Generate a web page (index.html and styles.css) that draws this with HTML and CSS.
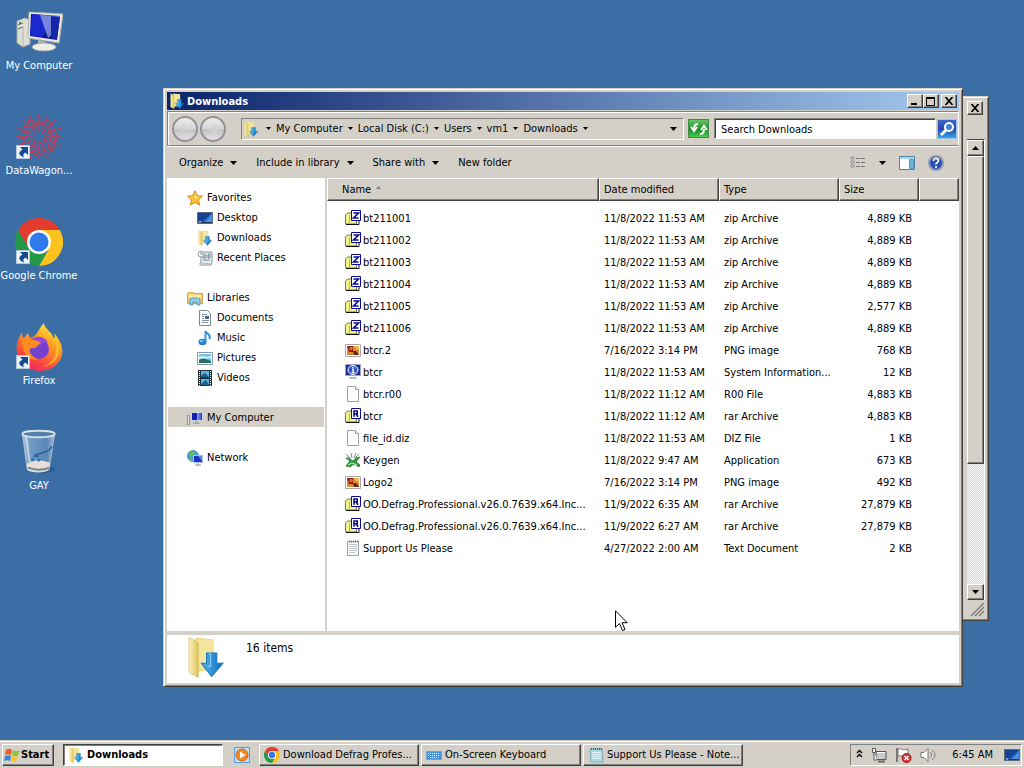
FILE: index.html
```html
<!DOCTYPE html>
<html lang="en">
<head>
    <meta charset="utf-8">
    <title>Downloads</title>
    <link rel="stylesheet" href="styles.css">
</head>
<body>

<svg class="sprite" aria-hidden="true">
    <defs>
        <linearGradient id="g-fold" x1="0" x2="1"><stop offset="0" stop-color="#fbf3bd"/><stop offset="1" stop-color="#dfc257"/></linearGradient>
        <linearGradient id="g-arrow" x1="0" x2="1"><stop offset="0" stop-color="#52b8f0"/><stop offset="1" stop-color="#0c6cc0"/></linearGradient>
        <linearGradient id="g-screen" x1="0" x2="1"><stop offset="0" stop-color="#0c1fa8"/><stop offset=".48" stop-color="#1324c4"/><stop offset=".52" stop-color="#8c9fe8"/><stop offset="1" stop-color="#1a2fd0"/></linearGradient>
        <linearGradient id="g-fire" x1=".8" y1="0" x2=".3" y2="1"><stop offset="0" stop-color="#fff14a"/><stop offset=".4" stop-color="#ff9a1f"/><stop offset=".75" stop-color="#ff4b3c"/><stop offset="1" stop-color="#e8256c"/></linearGradient>
        <linearGradient id="g-glass" x1="0" x2="1"><stop offset="0" stop-color="#c5d6e4"/><stop offset=".25" stop-color="#7fa5c8"/><stop offset=".75" stop-color="#5c8abb"/><stop offset="1" stop-color="#b9cddf"/></linearGradient>
    </defs>
    <symbol id="i-downloads" viewBox="0 0 36 40">
        <path d="M8 1l18 2v28l-16 4z" fill="#eedc88"/>
        <path d="M10 3l15 1v26l-14 2z" fill="#f3e6a0"/>
        <path d="M2 1l9 5v34l-9-5z" fill="url(#g-fold)" stroke="#d2b95c" stroke-width=".7"/>
        <path d="M19 16h10v10h6L24 39 14 26h5z" fill="url(#g-arrow)" stroke="#1b75bb"/>
        <path d="M21 17h2v12h-3" fill="none" stroke="#8dd4fa"/>
    </symbol>
    <symbol id="i-zip" viewBox="0 0 16 16">
        <path d="M.5 14V5l2-2h9v11z" fill="#f4f48c" stroke="#77775a"/>
        <path d="M1 14.500h13V10" fill="none" stroke="#111"/>
        <path d="M4.500 5v8" stroke="#b9b96a"/>
        <path d="M6.500.5h9v10h-9z" fill="#fff" stroke="#0b0b90"/>
        <path d="M8.500 3h5l-5 5h5" fill="none" stroke="#0b0b90" stroke-width="1.600"/>
    </symbol>
    <symbol id="i-rar" viewBox="0 0 16 16">
        <path d="M.5 14V5l2-2h9v11z" fill="#f4f48c" stroke="#77775a"/>
        <path d="M1 14.500h13V10" fill="none" stroke="#111"/>
        <path d="M4.500 5v8" stroke="#b9b96a"/>
        <path d="M6.500.5h9v10h-9z" fill="#fff" stroke="#0b0b90"/>
        <path d="M9 8.800V3h3.200v2.800H9h2l2 3" fill="none" stroke="#0b0b90" stroke-width="1.600"/>
    </symbol>
    <symbol id="i-png" viewBox="0 0 16 16">
        <path d="M.5 2.500h15v12H.5z" fill="#fff" stroke="#aaa"/>
        <path d="M2 4h12v9H2z" fill="#d88a34"/>
        <path d="M2 4h6v6H4z" fill="#8a2410"/><circle cx="6" cy="6.500" r="1.700" fill="#e8662b"/>
        <path d="M8 9h3l3 4H9z" fill="#612414"/><path d="M9 4h5v4l-3-1z" fill="#f2b959"/>
    </symbol>
    <symbol id="i-sysinfo" viewBox="0 0 16 16">
        <path d="M.5.500h15v11H.5z" fill="#1c2b98" stroke="#99a4c8"/>
        <ellipse cx="8" cy="6" rx="5" ry="4.500" fill="#3557cc" stroke="#fff"/>
        <path d="M8 2.800v1.400M7 5.500h1.300v3M6.600 8.700h3" stroke="#fff" stroke-width="1.300" fill="none"/>
        <path d="M5 13h6l1 2H4z" fill="#b4bac6"/>
    </symbol>
    <symbol id="i-page" viewBox="0 0 16 16">
        <path d="M2.500.5h8l3 3v12h-11z" fill="#fcfcfa" stroke="#a0a0a0"/><path d="M10.500.5v3h3" fill="#eee" stroke="#a0a0a0"/>
    </symbol>
    <symbol id="i-text" viewBox="0 0 16 16">
        <path d="M2.500 1.500h11v14h-11z" fill="#f7f8f9" stroke="#9ca2a6"/>
        <path d="M4 1.500h9" stroke="#777" stroke-width="2" stroke-dasharray="1 1"/>
        <path d="M4 4.500h8M4 6.500h8M4 8.500h8M4 10.500h8M4 12.500h6" stroke="#c0c5c9"/>
    </symbol>
    <symbol id="i-keygen" viewBox="0 0 16 16">
        <path d="M1 6l4 1 3 2 3-3 4-1-4 5 4 3-1 2-5-3-4 3-4-1 4-5z" fill="#2f9e40" stroke="#17672a" stroke-width=".7"/>
        <path d="M1 2l4 4M6 1l1 5M11 1L9 6M2 5l4 2M14 2l-4 4" stroke="#7f8f82" fill="none"/>
        <path d="M3 13l4-2 5 2" stroke="#c6f0ca" fill="none"/>
    </symbol>
    <symbol id="i-star" viewBox="0 0 16 16">
        <path d="M8 .8l2.200 4.900 5.200.5-3.900 3.600 1.100 5.300L8 12.400l-4.600 2.700 1.100-5.300L.6 6.200l5.200-.5z" fill="#fdc53c" stroke="#d98618"/>
        <path d="M8 3l1.300 3.400 3 .4L8 8.500z" fill="#fff0a4"/>
    </symbol>
    <symbol id="i-desktop" viewBox="0 0 16 16">
        <path d="M.5 2.500h15v11H.5z" fill="#2366c4" stroke="#5a6b80"/>
        <path d="M1 3h14L6 11H1z" fill="#174394"/><path d="M8 12l7-8v8z" fill="#4790e8"/>
        <path d="M1 12.500h14" stroke="#223a5c"/><path d="M2 12h2" stroke="#cfe5ff"/>
    </symbol>
    <symbol id="i-recent" viewBox="0 0 16 16">
        <path d="M4 2h11v10l-1 3H3l1-4z" fill="#e4e9ee" stroke="#8d97a1"/>
        <path d="M6 5h3v3H6zM11 4h2v4h-2zM6 10h7" fill="#b8c6d2" stroke="#6b7f92" stroke-width=".8"/>
        <path d="M2 13h11v2H3z" fill="#b8c1c8"/><circle cx="4" cy="4" r="3" fill="#f4f7f9" stroke="#9aa4ae"/><path d="M4 2.200V4h2" fill="none" stroke="#687"/>
    </symbol>
    <symbol id="i-libraries" viewBox="0 0 16 16">
        <path d="M.5 3.500l1-1h5l1 1h8v10H.5z" fill="#f0cf70" stroke="#c9a64c"/>
        <path d="M2 5h12v3H2z" fill="#fbeba7"/><path d="M3 15V9l2-1h6l2 1v6h-3v-3H6v3z" fill="#8fd0f2" stroke="#438cbf" stroke-width=".8"/>
    </symbol>
    <symbol id="i-doc" viewBox="0 0 16 16">
        <path d="M2.500.5h8l3 3v12h-11z" fill="#fff" stroke="#7f8a94"/>
        <path d="M5 4.500h5M5 6.500h2M5 8.500h2M5 10.500h7M5 12.500h6" stroke="#8292a0"/><path d="M8 6h4v3H8z" fill="#4d6579"/>
    </symbol>
    <symbol id="i-music" viewBox="0 0 16 16">
        <ellipse cx="5.500" cy="12" rx="4" ry="3.200" fill="#2384d0"/><path d="M8.500 12V1c1 3 6 3 4 8" fill="none" stroke="#2d94df" stroke-width="2"/><ellipse cx="4.500" cy="11" rx="1.500" ry="1" fill="#8dd4fa"/>
    </symbol>
    <symbol id="i-pictures" viewBox="0 0 16 16">
        <path d="M.5 2.500h15v12H.5z" fill="#fff" stroke="#8499aa"/><path d="M2 4h12v9H2z" fill="#78c3ea"/><path d="M2 10l4-2 8 3v2H2z" fill="#286e64"/><path d="M2 7c4-2 7 1 12-1v2c-5 1-7 0-12 1z" fill="#daf2fb"/>
    </symbol>
    <symbol id="i-videos" viewBox="0 0 16 16">
        <path d="M1 0h14v16H1z" fill="#26343f"/><path d="M4 1h8v6H4zM4 9h8v6H4z" fill="#5bb2db"/><path d="M4 6l4-3 4 4H4zM4 14l5-4 3 5H4z" fill="#1a6290"/>
        <path d="M2.500 1v15M13.500 1v15" stroke="#fff" stroke-dasharray="1 1"/>
    </symbol>
    <symbol id="i-pc" viewBox="0 0 16 16">
        <path d="M.5 5.500h2v9h-2z" fill="#e6e8e6" stroke="#8c9296"/><path d="M4.500 2.500h11v8h-11z" fill="url(#g-screen)" stroke="#cfd4d8"/><path d="M8 11h3v2h2v1H6v-1h2z" fill="#a5acb2"/>
    </symbol>
    <symbol id="i-network" viewBox="0 0 16 16">
        <circle cx="6" cy="6" r="5.500" fill="#3fa3df" stroke="#2372b0" stroke-width=".7"/><path d="M3 2l4-1 1 3-4 3-2-1zM2 8l3 1v2H3z" fill="#64c254"/>
        <path d="M6.500 5.500h9v7h-9z" fill="#1d30cb" stroke="#aac4dc"/><path d="M11 6l4 5V6z" fill="#6d84ea"/><path d="M11 13v2M8 15h6" stroke="#7d92a6"/>
    </symbol>
    <symbol id="i-computer" viewBox="0 0 48 42">
        <path d="M2 10l8-3 5 2v24l-7 3-6-4z" fill="#dfded6" stroke="#a8a89e"/><path d="M3 14l5-2M3 18l5-2" stroke="#60635e"/><circle cx="5" cy="12" r="1" fill="#41553d"/>
        <path d="M8 15v20" stroke="#b6b6ac"/>
        <path d="M23 29l8 2 1 3-9-1z" fill="#b4b6b4"/><ellipse cx="29" cy="36" rx="12" ry="4" fill="#eeede7" stroke="#a4a6a2"/>
        <path d="M14 1l34 2-4 29-31-5z" fill="#e9e8df" stroke="#b5b5aa"/><path d="M16 3l29 2-3 24-27-4z" fill="#0c1396"/>
        <path d="M17 3l20 2-9 21-13-2z" fill="#1a29ce"/><path d="M25 4l20 1-2 13-10 9z" fill="#8e9fe3" opacity=".8"/><path d="M36 5l9 1-3 22-6-1z" fill="#1526a9"/>
    </symbol>
    <symbol id="i-wagon" viewBox="0 0 48 48">
        <g fill="none" stroke="#b5415f" stroke-width="1.400" stroke-dasharray="4 2">
            <circle cx="24" cy="24" r="6"/><circle cx="24" cy="24" r="12"/><circle cx="24" cy="24" r="18"/>
            <path d="M24 1v16M24 31v16M1 24h16M31 24h16M8 7l12 12M28 28l12 12M40 7L28 19M20 29L8 41M15 2l6 16M33 2l-6 16M2 15l16 6M46 15l-16 6M2 33l16-6M46 33l-16-6M15 46l6-16M33 46l-6-16"/>
            <path d="M14 7l20 6 7 20-20 8-14-14zM34 7L14 14 7 33l20 8 14-14z"/>
        </g>
    </symbol>
    <symbol id="i-chrome" viewBox="0 0 48 48">
        <path d="M3.200 12A24 24 0 0 1 44.800 12H24z" fill="#e33b2e"/>
        <path d="M44.800 12A24 24 0 0 1 24 48l10.400-18L24 12z" fill="#fcc31e"/>
        <path d="M24 48A24 24 0 0 1 3.200 12l10.400 18L24 36h7z" fill="#229a48"/>
        <path d="M3.200 12L13.600 30 24 12z" fill="#e33b2e"/>
        <circle cx="24" cy="24" r="12" fill="#fff"/><circle cx="24" cy="24" r="9.500" fill="#2f79ed"/>
    </symbol>
    <symbol id="i-firefox" viewBox="0 0 48 48">
        <path d="M29 0c0 6 8 8 10 16 1-2 1-4 0-6 10 11 11 23 3 31-10 10-28 9-36-2C-1 29 1 19 7 9c0 3 0 5 2 6l4-5 2 5c8-2 8-9 14-15z" fill="url(#g-fire)"/>
        <circle cx="24" cy="26" r="10" fill="#7440d0"/><path d="M15 18c4-7 16-5 18 2-5-2-8 0-7 4z" fill="#9a44df"/>
        <path d="M7 14c4 4 14 1 19 6-4 1-3 6-9 5-4 0-3 8 6 11-9 3-17-6-16-22z" fill="#ff8a21"/><path d="M30 3c2 11 13 13 11 25-1 8-7 14-14 16 17-2 22-19 12-31l1 5z" fill="#ffc62a" opacity=".7"/>
    </symbol>
    <symbol id="i-bin" viewBox="0 0 40 52">
        <ellipse cx="24" cy="45" rx="14" ry="4" fill="#245080" opacity=".5"/>
        <path d="M2 6l5 38c4 5 20 5 24 0l6-38z" fill="url(#g-glass)" opacity=".85" stroke="#c0cfdb"/>
        <path d="M7 39c5-5 19-5 25-1l-1 7c-4 4-20 4-24 0z" fill="#e4e0d8"/><path d="M8 43c7 3 17 3 23 0" fill="none" stroke="#77838b" stroke-width="2"/>
        <ellipse cx="19.500" cy="6.500" rx="17.500" ry="3.500" fill="#527fac" stroke="#d8e0e5" stroke-width="2"/>
        <path d="M34 20c-4 8-9 5-15 9" fill="none" stroke="#31639c" stroke-width="2"/><path d="M13 31l5-4 2 5zM11 34l4-2-1 4zM18 34l5-1-4 4z" fill="#2564b5"/><path d="M6 10l4 27" stroke="#fff" opacity=".5" stroke-width="2"/>
    </symbol>
    <symbol id="i-shortcut" viewBox="0 0 14 14">
        <path d="M.5.500h13v13H.5z" fill="#edf3fa" stroke="#b5c7dc"/><path d="M4 2h8v8L9.500 7.500C7 9 7 10 8 12.500 2 10 2 7 6.500 4.500z" fill="#144a90"/>
    </symbol>
    <symbol id="i-windows" viewBox="0 0 16 16">
        <path d="M2 3c2-2 4-1 6 0L7 8C5 7 3 7 1 8z" fill="#ea6228"/><path d="M9 3c2 1 4 2 7 0l-2 5c-2 2-4 1-6 0z" fill="#8ac53e"/>
        <path d="M1 9c2-1 4-1 6 0l-1 5c-2-1-4-1-6 0z" fill="#338bd5"/><path d="M8 9c2 1 4 1 6 0l-2 5c-2 1-4 1-5 0z" fill="#f8c52d"/>
    </symbol>
    <symbol id="i-player" viewBox="0 0 16 16">
        <path d="M.5.500h15v15H.5z" fill="#c4dcf2" stroke="#5c9cd8"/><circle cx="8" cy="8" r="6" fill="#ef8b22" stroke="#cf6a0e"/><path d="M6 4.500l5.500 3.500L6 11.500z" fill="#fff"/>
    </symbol>
    <symbol id="i-keyboard" viewBox="0 0 16 16">
        <path d="M.5 4.500h15v8H.5z" fill="#4a93d8" stroke="#6aa6de"/><path d="M2 6.500h12M2 8.500h12M4 10.500h8" stroke="#dceeff" stroke-dasharray="1 1"/>
    </symbol>
    <symbol id="i-notepad" viewBox="0 0 16 16">
        <path d="M2 2h12l1 13H3z" fill="#a4dce5" stroke="#7fb2bc"/><path d="M3 2h11" stroke="#4b5c60" stroke-width="2" stroke-dasharray="1 1"/><path d="M4 5.500h9M4 7.500h9M4 9.500h9M4 11.500h9" stroke="#e1f6fa"/>
    </symbol>
    <symbol id="i-down" viewBox="0 0 7 4"><path d="M0 0h7L3.500 4z"/></symbol>
    <symbol id="i-close" viewBox="0 0 10 8"><path d="M1.500 0l7 8M8.500 0l-7 8" stroke="#000" stroke-width="1.700"/></symbol>
</svg>

<main class="desktop">
    <nav class="shortcuts" aria-label="Desktop">
        <a class="shortcut" href="#"><span class="shortcut-icon"><svg class="icon-48"><use href="#i-computer"/></svg></span>My Computer</a>
        <a class="shortcut" href="#"><span class="shortcut-icon"><svg class="icon-48"><use href="#i-wagon"/></svg><svg class="overlay"><use href="#i-shortcut"/></svg></span>DataWagon...</a>
        <a class="shortcut" href="#"><span class="shortcut-icon"><svg class="icon-48"><use href="#i-chrome"/></svg><svg class="overlay"><use href="#i-shortcut"/></svg></span>Google Chrome</a>
        <a class="shortcut" href="#"><span class="shortcut-icon"><svg class="icon-48"><use href="#i-firefox"/></svg><svg class="overlay"><use href="#i-shortcut"/></svg></span>Firefox</a>
        <a class="shortcut" href="#"><span class="shortcut-icon"><svg class="icon-48"><use href="#i-bin"/></svg></span>GAY</a>
    </nav>

    <!-- window behind -->
    <section class="window window-back">
        <div class="back-title">
            <button class="caption-btn" aria-label="Close"><svg width="10" height="8"><use href="#i-close"/></svg></button>
        </div>
        <div class="scrollbar">
            <button class="scroll-btn" aria-label="Scroll up"><svg class="flip" width="7" height="4"><use href="#i-down"/></svg></button>
            <div class="scroll-track"><div class="scroll-thumb"></div></div>
            <button class="scroll-btn" aria-label="Scroll down"><svg width="7" height="4"><use href="#i-down"/></svg></button>
        </div>
        <div class="back-status"><svg width="14" height="14"><path d="M1 14L14 1M5 14l9-9M9 14l5-5" stroke="#808080" stroke-width="1.500"/></svg></div>
    </section>

    <section class="window window-main">
        <header class="titlebar">
            <svg class="icon"><use href="#i-downloads"/></svg>
            <h1>Downloads</h1>
            <button class="caption-btn" aria-label="Minimize"><svg width="10" height="8"><path d="M1 6h6v2H1z"/></svg></button>
            <button class="caption-btn" aria-label="Maximize"><svg width="10" height="9"><path d="M.5 1.500h8v7h-8zM0 .5h9" fill="none" stroke="#000"/></svg></button>
            <button class="caption-btn caption-close" aria-label="Close"><svg width="10" height="8"><use href="#i-close"/></svg></button>
        </header>

        <div class="addressbar">
            <div class="travel">
                <button aria-label="Back"><svg width="12" height="10"><path d="M11 5H2M6 1L2 5l4 4" fill="none" stroke="#d2d2d4" stroke-width="2"/></svg></button>
                <button aria-label="Forward"><svg width="12" height="10"><path d="M1 5h9M6 1l4 4-4 4" fill="none" stroke="#d2d2d4" stroke-width="2"/></svg></button>
            </div>
            <div class="address">
                <svg class="icon"><use href="#i-downloads"/></svg>
                <svg class="crumb-arrow"><use href="#i-down"/></svg>
                <a href="#">My Computer</a><svg class="crumb-arrow"><use href="#i-down"/></svg>
                <a href="#">Local Disk (C:)</a><svg class="crumb-arrow"><use href="#i-down"/></svg>
                <a href="#">Users</a><svg class="crumb-arrow"><use href="#i-down"/></svg>
                <a href="#">vm1</a><svg class="crumb-arrow"><use href="#i-down"/></svg>
                <a href="#">Downloads</a><svg class="crumb-arrow"><use href="#i-down"/></svg>
                <button class="address-drop" aria-label="Previous locations"><svg width="7" height="4"><use href="#i-down"/></svg></button>
            </div>
            <button class="refresh" aria-label="Refresh"><svg width="18" height="16"><path d="M8 3c-3 0-4 2-4 5M1 6l3 4 3-4M10 13c3 0 4-2 4-5M11 9l3-4 3 4" fill="none" stroke="#fff" stroke-width="2"/></svg></button>
            <input class="search" type="text" aria-label="Search Downloads" placeholder="Search Downloads">
            <button class="search-go" aria-label="Search"><svg width="16" height="16"><circle cx="10" cy="6" r="4" fill="#3f7fd8" stroke="#fff" stroke-width="2"/><path d="M7 9l-5 5" stroke="#fff" stroke-width="3"/></svg></button>
        </div>

        <div class="toolbar">
            <button>Organize <svg width="7" height="4"><use href="#i-down"/></svg></button>
            <button>Include in library <svg width="7" height="4"><use href="#i-down"/></svg></button>
            <button>Share with <svg width="7" height="4"><use href="#i-down"/></svg></button>
            <button>New folder</button>
            <div class="view-tools">
                <button aria-label="Change view"><svg width="16" height="14"><path d="M1 1h3v2H1zM1 5h3v2H1zM1 9h3v2H1z" fill="#fff" stroke="#888"/><path d="M6 2.500h4M11 2.500h4M6 6.500h4M11 6.500h4M6 10.500h4M11 10.500h4" stroke="#777"/></svg></button>
                <button aria-label="More views"><svg width="7" height="4"><use href="#i-down"/></svg></button>
                <button aria-label="Preview pane"><svg width="16" height="14"><path d="M.5.500h15v13H.5z" fill="#fff" stroke="#5385aa"/><path d="M1 1h14v2H1z" fill="#a9d7ef"/><path d="M10.500 3.500h4v9h-4z" fill="#73b5d8" stroke="#5598c1"/></svg></button>
                <button aria-label="Help"><svg width="16" height="16"><circle cx="8" cy="8" r="7" fill="#2d4fb2" stroke="#8b99b8" stroke-width="2"/><path d="M5.500 6c0-4 5-3 5-.5 0 2-2.500 2-2.500 4M8 11v2" fill="none" stroke="#fff" stroke-width="1.700"/></svg></button>
            </div>
        </div>

        <div class="panes">
            <nav class="tree" aria-label="Folders">
                <ul>
                    <li><a href="#"><svg class="icon"><use href="#i-star"/></svg>Favorites</a>
                        <ul>
                            <li><a href="#"><svg class="icon"><use href="#i-desktop"/></svg>Desktop</a></li>
                            <li><a href="#"><svg class="icon"><use href="#i-downloads"/></svg>Downloads</a></li>
                            <li><a href="#"><svg class="icon"><use href="#i-recent"/></svg>Recent Places</a></li>
                        </ul>
                    </li>
                    <li><a href="#"><svg class="icon"><use href="#i-libraries"/></svg>Libraries</a>
                        <ul>
                            <li><a href="#"><svg class="icon"><use href="#i-doc"/></svg>Documents</a></li>
                            <li><a href="#"><svg class="icon"><use href="#i-music"/></svg>Music</a></li>
                            <li><a href="#"><svg class="icon"><use href="#i-pictures"/></svg>Pictures</a></li>
                            <li><a href="#"><svg class="icon"><use href="#i-videos"/></svg>Videos</a></li>
                        </ul>
                    </li>
                    <li><a class="selected" href="#"><svg class="icon"><use href="#i-pc"/></svg>My Computer</a></li>
                    <li><a href="#"><svg class="icon"><use href="#i-network"/></svg>Network</a></li>
                </ul>
            </nav>

            <div class="list">
                <table class="files">
                    <colgroup><col><col class="col-date"><col class="col-type"><col class="col-size"><col class="col-rest"></colgroup>
                    <thead>
                        <tr><th>Name <svg class="sort" width="5" height="3"><path d="M0 3L2.500 0 5 3z" fill="#808080"/></svg></th><th>Date modified</th><th>Type</th><th>Size</th><th></th></tr>
                    </thead>
                    <tbody>
                        <tr><td><svg class="icon"><use href="#i-zip"/></svg>bt211001</td><td>11/8/2022 11:53 AM</td><td>zip Archive</td><td>4,889 KB</td><td></td></tr>
                        <tr><td><svg class="icon"><use href="#i-zip"/></svg>bt211002</td><td>11/8/2022 11:53 AM</td><td>zip Archive</td><td>4,889 KB</td><td></td></tr>
                        <tr><td><svg class="icon"><use href="#i-zip"/></svg>bt211003</td><td>11/8/2022 11:53 AM</td><td>zip Archive</td><td>4,889 KB</td><td></td></tr>
                        <tr><td><svg class="icon"><use href="#i-zip"/></svg>bt211004</td><td>11/8/2022 11:53 AM</td><td>zip Archive</td><td>4,889 KB</td><td></td></tr>
                        <tr><td><svg class="icon"><use href="#i-zip"/></svg>bt211005</td><td>11/8/2022 11:53 AM</td><td>zip Archive</td><td>2,577 KB</td><td></td></tr>
                        <tr><td><svg class="icon"><use href="#i-zip"/></svg>bt211006</td><td>11/8/2022 11:53 AM</td><td>zip Archive</td><td>4,889 KB</td><td></td></tr>
                        <tr><td><svg class="icon"><use href="#i-png"/></svg>btcr.2</td><td>7/16/2022 3:14 PM</td><td>PNG image</td><td>768 KB</td><td></td></tr>
                        <tr><td><svg class="icon"><use href="#i-sysinfo"/></svg>btcr</td><td>11/8/2022 11:53 AM</td><td>System Information...</td><td>12 KB</td><td></td></tr>
                        <tr><td><svg class="icon"><use href="#i-page"/></svg>btcr.r00</td><td>11/8/2022 11:12 AM</td><td>R00 File</td><td>4,883 KB</td><td></td></tr>
                        <tr><td><svg class="icon"><use href="#i-rar"/></svg>btcr</td><td>11/8/2022 11:12 AM</td><td>rar Archive</td><td>4,883 KB</td><td></td></tr>
                        <tr><td><svg class="icon"><use href="#i-page"/></svg>file_id.diz</td><td>11/8/2022 11:53 AM</td><td>DIZ File</td><td>1 KB</td><td></td></tr>
                        <tr><td><svg class="icon"><use href="#i-keygen"/></svg>Keygen</td><td>11/8/2022 9:47 AM</td><td>Application</td><td>673 KB</td><td></td></tr>
                        <tr><td><svg class="icon"><use href="#i-png"/></svg>Logo2</td><td>7/16/2022 3:14 PM</td><td>PNG image</td><td>492 KB</td><td></td></tr>
                        <tr><td><svg class="icon"><use href="#i-rar"/></svg>OO.Defrag.Professional.v26.0.7639.x64.Inc...</td><td>11/9/2022 6:35 AM</td><td>rar Archive</td><td>27,879 KB</td><td></td></tr>
                        <tr><td><svg class="icon"><use href="#i-rar"/></svg>OO.Defrag.Professional.v26.0.7639.x64.Inc...</td><td>11/9/2022 6:27 AM</td><td>rar Archive</td><td>27,879 KB</td><td></td></tr>
                        <tr><td><svg class="icon"><use href="#i-text"/></svg>Support Us Please</td><td>4/27/2022 2:00 AM</td><td>Text Document</td><td>2 KB</td><td></td></tr>
                    </tbody>
                </table>
            </div>
        </div>

        <footer class="details">
            <svg class="details-icon"><use href="#i-downloads"/></svg>
            <p>16 items</p>
        </footer>
    </section>

    <svg class="cursor" width="13" height="22"><path d="M.5.800v16.500l4-3.800 3 7 2.500-1-3-6.800h5.200z" fill="#fff" stroke="#000"/></svg>
</main>

<footer class="taskbar">
    <button class="start"><svg class="icon"><use href="#i-windows"/></svg>Start</button>
    <button class="task active"><svg class="icon"><use href="#i-downloads"/></svg>Downloads</button>
    <button class="quick" aria-label="Media Player"><svg class="icon"><use href="#i-player"/></svg></button>
    <div class="tasks">
        <button class="task"><svg class="icon"><use href="#i-chrome"/></svg>Download Defrag Profes...</button>
        <button class="task"><svg class="icon"><use href="#i-keyboard"/></svg>On-Screen Keyboard</button>
        <button class="task"><svg class="icon"><use href="#i-notepad"/></svg>Support Us Please - Note...</button>
    </div>
    <div class="tray">
        <button aria-label="Show hidden icons"><svg width="7" height="12"><path d="M1 4l2.500-2.500L6 4M1 8l2.500-2.500L6 8" fill="none" stroke="#000" stroke-width="1.400"/></svg></button>
        <button aria-label="Network"><svg width="16" height="16"><path d="M5 4.500h10v8H5z" fill="#c9cbca" stroke="#555"/><path d="M6 5.500h8" stroke="#fff"/><path d="M7 14.500h7" stroke="#666" stroke-width="2"/><path d="M1.500 1.500h3v4h-3zM3 5v8h3" fill="#fff" stroke="#555"/></svg></button>
        <button aria-label="Action Center"><svg width="17" height="16"><path d="M2 1v14" stroke="#777" stroke-width="2"/><path d="M3 2c4-1 4 2 10 0v7c-5 2-6-1-10 0z" fill="#fff" stroke="#777"/><circle cx="11.500" cy="11" r="4.500" fill="#d8352f" stroke="#a31616"/><path d="M9.500 9l4 4M13.500 9l-4 4" stroke="#fff" stroke-width="1.500"/></svg></button>
        <button aria-label="Volume"><svg width="17" height="16"><path d="M1 5.500h3l4-4v13l-4-4H1z" fill="#fff" stroke="#777"/><path d="M10 5c2 2 2 4 0 6M12 3c4 3 4 7 0 10" fill="none" stroke="#777"/></svg></button>
        <span class="clock">6:45 AM</span>
        <button aria-label="Show desktop"><svg class="icon"><use href="#i-desktop"/></svg></button>
    </div>
</footer>

</body>
</html>
```
FILE: styles.css
```css
* {
    box-sizing: border-box;
}

body {
    margin: 0;
    height: 100vh;
    display: flex;
    flex-direction: column;
    overflow: hidden;
    background: #3a6ea5;
    font: 11px/14px "DejaVu Sans Condensed", Tahoma, "DejaVu Sans", sans-serif;
    color: #000;
}

a {
    color: inherit;
    text-decoration: none;
}

ul {
    list-style: none;
    margin: 0;
    padding: 0;
}

button {
    font: inherit;
    color: inherit;
    background: none;
    border: none;
    padding: 0;
    display: flex;
    align-items: center;
    white-space: nowrap;
}

svg {
    flex: none;
}

.sprite {
    position: absolute;
    width: 0;
    height: 0;
}

.icon {
    width: 16px;
    height: 16px;
}

/* desktop */

.desktop {
    flex: 1;
    position: relative;
    min-height: 0;
}

.shortcuts {
    display: flex;
    flex-direction: column;
    gap: 35px;
    width: 78px;
    padding-top: 8px;
}

.shortcut {
    display: flex;
    flex-direction: column;
    align-items: center;
    gap: 3px;
    height: 70px;
    color: #fff;
    white-space: nowrap;
}

.shortcut-icon {
    position: relative;
    height: 48px;
}

.icon-48 {
    width: 48px;
    height: 48px;
}

.overlay {
    position: absolute;
    left: 1px;
    bottom: 2px;
    width: 14px;
    height: 14px;
}

/* windows */

.window {
    position: absolute;
    display: flex;
    flex-direction: column;
    background: #d4d0c8;
    border: 1px solid;
    border-color: #d4d0c8 #404040 #404040 #d4d0c8;
    box-shadow: inset 1px 1px #fff, inset -1px -1px #808080;
    padding: 3px;
}

.window-main {
    left: 163px;
    right: 61px;
    top: 88px;
    bottom: 53px;
}

.window-back {
    left: 190px;
    right: 35px;
    top: 96px;
    bottom: 119px;
    align-items: flex-end;
}

.back-title {
    height: 39px;
    padding: 1px 2px;
}

.caption-btn {
    width: 16px;
    height: 14px;
    justify-content: center;
    background: #d4d0c8;
    border: 1px solid;
    border-color: #fff #404040 #404040 #fff;
    box-shadow: inset -1px -1px #808080;
}

.scrollbar {
    flex: 1;
    display: flex;
    flex-direction: column;
    width: 18px;
    border-top: 1px solid #404040;
    border-right: 1px solid #fff;
}

.scroll-btn {
    height: 16px;
    justify-content: center;
    background: #d4d0c8;
    border: 1px solid;
    border-color: #fff #404040 #404040 #fff;
    box-shadow: inset -1px -1px #808080;
}

.flip {
    transform: rotate(180deg);
}

.scroll-track {
    flex: 1;
    background: repeating-conic-gradient(#fff 0 25%, #d4d0c8 0 50%) 0 0 / 2px 2px;
}

.scroll-thumb {
    height: 72%;
    background: #d4d0c8;
    border: 1px solid;
    border-color: #fff #404040 #404040 #fff;
    box-shadow: inset -1px -1px #808080;
}

.back-status {
    width: 17px;
    height: 17px;
    padding: 2px;
}

.titlebar {
    display: flex;
    align-items: center;
    height: 18px;
    padding: 0 2px;
    background: linear-gradient(90deg, #0a246a, #a6caf0);
    color: #fff;
}

.titlebar h1 {
    flex: 1;
    margin: 0 0 0 2px;
    padding-top: 1px;
    font-size: 11px;
    line-height: 18px;
}

.caption-close {
    margin-left: 2px;
}

.addressbar {
    display: flex;
    align-items: center;
    height: 35px;
    margin-top: 1px;
    padding: 0 1px 0 4px;
    border: 1px solid;
    border-color: #808080 #fff #808080 #808080;
    box-shadow: inset 1px 1px #fff, 0 1px #fff;
}

.travel {
    display: flex;
    gap: 2px;
    margin-right: 15px;
}

.travel button {
    width: 26px;
    height: 26px;
    justify-content: center;
    border: 2px solid #929297;
    border-radius: 50%;
    background: linear-gradient(#eeeeef, #d4d4d6 50%, #c2c2c4 51%, #e2e2e4);
}

.address {
    flex: 1;
    display: flex;
    align-items: center;
    height: 22px;
    padding-left: 1px;
    border: 1px solid;
    border-color: #808080 #fff #fff #808080;
    white-space: nowrap;
}

.crumb-arrow {
    width: 5px;
    height: 3px;
    margin: 0 5px;
}

.address .icon {
    margin-right: 2px;
}

.address-drop {
    margin-left: auto;
    padding: 4px 6px;
}

.refresh {
    width: 21px;
    height: 19px;
    margin: 0 5px 0 4px;
    justify-content: center;
    border: 1px solid #3b8c45;
    background: linear-gradient(#67c466, #23962d 50%, #148720 51%, #4ccc50);
}

.search {
    width: 222px;
    height: 21px;
    padding: 1px 6px 0;
    font: inherit;
    color: #000;
    background: #fff;
    border: 1px solid;
    border-color: #808080 #fff #fff #808080;
    border-radius: 0;
    box-shadow: inset 1px 1px #404040;
}

.search::placeholder {
    color: #000;
    opacity: 1;
}

.search-go {
    width: 20px;
    height: 20px;
    margin-left: 1px;
    justify-content: center;
    border: 1px solid #9cc4e8;
    background: linear-gradient(#3d66c9, #2147b4 50%, #37a5e2);
}

.toolbar {
    display: flex;
    align-items: center;
    gap: 19px;
    height: 32px;
    padding: 1px 15px 0 12px;
}

.toolbar button {
    gap: 7px;
}

.view-tools {
    display: flex;
    gap: 13px;
    margin-left: auto;
}

.panes {
    flex: 1;
    display: flex;
    min-height: 0;
}

.tree {
    width: 158px;
    padding: 9px 1px;
    background: #fff;
}

.tree > ul > li {
    margin-bottom: 20px;
}

.tree a {
    display: flex;
    align-items: center;
    gap: 4px;
    height: 20px;
    padding: 2px 0 0 19px;
}

.tree li li a {
    padding-left: 29px;
}

.tree .selected {
    background: #d4d0c8;
}

.list {
    flex: 1;
    min-width: 0;
    margin-left: 2px;
    background: #fff;
}

.files {
    width: 100%;
    table-layout: fixed;
    border-collapse: separate;
    border-spacing: 0;
    white-space: nowrap;
}

.col-date,
.col-type {
    width: 120px;
}

.col-size {
    width: 80px;
}

.col-rest {
    width: 40px;
}

.files th {
    height: 23px;
    padding: 1px 4px 0;
    background: #d4d0c8;
    border: 1px solid;
    border-color: #fff #404040 #404040 #fff;
    box-shadow: inset -1px -1px #808080;
    font-weight: normal;
    text-align: left;
}

.files th:first-child {
    padding-left: 14px;
}

.sort {
    margin-left: 2px;
    vertical-align: 4px;
}

.files tbody::before {
    content: "";
    display: block;
    height: 6px;
}

.files td {
    height: 22px;
    padding: 1px 5px 0;
}

.files td:first-child {
    padding: 0 0 0 18px;
}

.files td:nth-child(4) {
    padding-right: 7px;
    text-align: right;
}

.files .icon {
    margin-right: 2px;
    vertical-align: -4px;
}

.details {
    display: flex;
    gap: 22px;
    height: 52px;
    padding: 1px 20px;
    background: #fff;
    border-top: 4px solid #d4d0c8;
}

.details-icon {
    width: 37px;
    height: 42px;
}

.details p {
    margin: 5px 0;
    font-size: 12px;
}

.cursor {
    position: absolute;
    left: 615px;
    top: 610px;
}

/* taskbar */

.taskbar {
    display: flex;
    align-items: center;
    height: 28px;
    padding: 1px 2px 0;
    background: #d4d0c8;
    border-top: 1px solid #d4d0c8;
    box-shadow: inset 0 1px #fff;
}

.start {
    width: 52px;
    height: 22px;
    gap: 1px;
    margin-right: 9px;
    padding-left: 1px;
    font-weight: bold;
    border: 1px solid;
    border-color: #fff #404040 #404040 #fff;
    box-shadow: inset -1px -1px #808080;
}

.tasks {
    display: flex;
    flex: 1;
    gap: 2px;
    min-width: 0;
}

.task {
    flex: 0 1 160px;
    width: 160px;
    height: 22px;
    gap: 3px;
    padding: 0 4px;
    overflow: hidden;
    border: 1px solid;
    border-color: #fff #404040 #404040 #fff;
    box-shadow: inset -1px -1px #808080;
}

.task.active {
    background: #fff;
    font-weight: bold;
    border-color: #404040 #fff #fff #404040;
    box-shadow: inset 1px 1px #808080;
}

.quick {
    margin: 0 9px 0 11px;
}

.tray {
    display: flex;
    align-items: center;
    gap: 8px;
    height: 22px;
    padding: 0 1px 0 5px;
    border: 1px solid;
    border-color: #808080 #fff #fff #808080;
}

.clock {
    margin: 0 3px 0 7px;
    white-space: nowrap;
}
```
